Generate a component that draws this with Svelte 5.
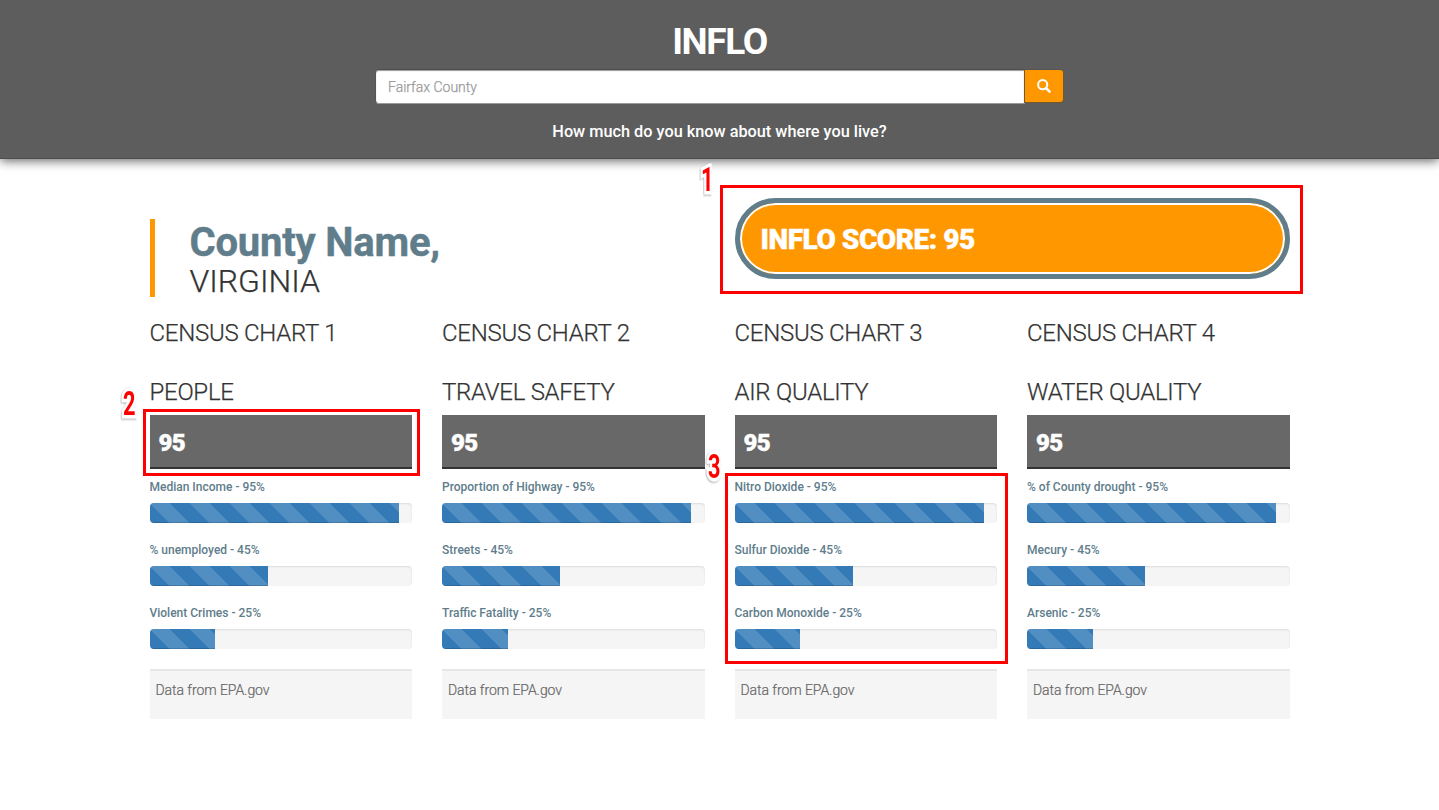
<script>
  const columns = [
    { chart: 'CENSUS CHART 1', title: 'PEOPLE', bars: [['Median Income', 95], ['% unemployed', 45], ['Violent Crimes', 25]] },
    { chart: 'CENSUS CHART 2', title: 'TRAVEL SAFETY', bars: [['Proportion of Highway', 95], ['Streets', 45], ['Traffic Fatality', 25]] },
    { chart: 'CENSUS CHART 3', title: 'AIR QUALITY', bars: [['Nitro Dioxide', 95], ['Sulfur Dioxide', 45], ['Carbon Monoxide', 25]] },
    { chart: 'CENSUS CHART 4', title: 'WATER QUALITY', bars: [['% of County drought', 95], ['Mecury', 45], ['Arsenic', 25]] }
  ];
</script>

<div class="page">
  <header>
    <h1>INFLO</h1>
    <div class="search">
      <input type="text" placeholder="Fairfax County" />
      <button aria-label="Search">
        <svg width="14" height="14" viewBox="0 0 14 14" fill="none" stroke="#fff">
          <circle cx="5.7" cy="5.7" r="4.6" stroke-width="2" />
          <path d="M9 9l3.6 3.6" stroke-width="2.5" stroke-linecap="round" />
        </svg>
      </button>
    </div>
    <p>How much do you know about where you live?</p>
  </header>

  <main>
    <section class="intro">
      <div class="county">
        <strong>County Name,</strong>
        <span>VIRGINIA</span>
      </div>
      <div class="score">INFLO SCORE: 95</div>
    </section>

    <section class="grid">
      {#each columns as col}
        <article>
          <h2>{col.chart}</h2>
          <h2 class="topic">{col.title}</h2>
          <div class="total">95</div>
          {#each col.bars as [label, value]}
            <div class="label">{label} - {value}%</div>
            <div class="track"><div class="fill" style="width: {value}%"></div></div>
          {/each}
          <footer>Data from EPA.gov</footer>
        </article>
      {/each}
    </section>
  </main>

  <div class="mark m1"></div>
  <div class="mark m2"></div>
  <div class="mark m3"></div>
  <span class="num n1">1</span>
  <span class="num n2">2</span>
  <span class="num n3">3</span>
</div>

<style>
  :global(body) { margin: 0; background: #fff; }
  .page, .page * { box-sizing: border-box; }
  .page {
    position: relative;
    height: 810px;
    overflow: hidden;
    font-family: Roboto, sans-serif;
    font-weight: 300;
    color: #333;
    background: #fff;
  }
  header {
    height: 159px;
    padding-top: 22px;
    display: flex;
    flex-direction: column;
    align-items: center;
    background: #5d5d5d;
    border-bottom: 1px solid #4d4d4d;
    box-shadow: 0 2px 10px rgba(0, 0, 0, 0.6);
    color: #fff;
  }
  h1 { margin: 0; font-size: 37px; line-height: 40px; font-weight: 700; letter-spacing: -1.4px; }
  .search { display: flex; align-items: flex-start; width: 689px; height: 35px; margin-top: 7px; }
  input {
    flex: 1;
    min-width: 0;
    height: 35px;
    padding: 1px 12px 0;
    border: 1px solid #999;
    border-top-color: #4c4c4c;
    border-left-color: #555;
    border-radius: 4px 0 0 4px;
    background: #fff;
    font: 300 14px Roboto, sans-serif;
    box-shadow: inset 0 1px 1px rgba(0, 0, 0, 0.4);
  }
  input::placeholder { color: #999; opacity: 1; -webkit-text-stroke: 0.25px #999; }
  button {
    width: 40px;
    height: 34px;
    margin-left: -1px;
    padding: 0;
    display: flex;
    align-items: center;
    justify-content: center;
    border: 1px solid #74582c;
    border-top-color: #555;
    border-radius: 0 4px 4px 0;
    background: #ff9800;
  }
  header p { margin: 17px 0 0; font-size: 16.3px; line-height: 22px; font-weight: 500; }
  main { width: 1140px; margin: 0 auto; }
  .intro { display: grid; grid-template-columns: 1fr 1fr; column-gap: 30px; height: 161px; padding-top: 39px; }
  .county { margin-top: 21px; height: 78px; padding-left: 35px; border-left: 5px solid #ff9800; }
  .county strong { display: block; padding-top: 4px; font-size: 40px; line-height: 40px; font-weight: 700; letter-spacing: -0.2px; color: #607d8b; -webkit-text-stroke: 0.4px #607d8b; }
  .county span { display: block; font-size: 32px; line-height: 36px; -webkit-text-stroke: 0.25px #333; }
  .score {
    height: 81px;
    padding-left: 21px;
    border: 5px solid #607d8b;
    border-radius: 41px;
    background: #ff9800;
    box-shadow: inset 0 0 0 2px #fff;
    color: #fff;
    font-size: 28px;
    line-height: 73px;
    font-weight: 900;
    letter-spacing: -0.45px;
    -webkit-text-stroke: 0.4px #fff;
  }
  .grid { display: grid; grid-template-columns: repeat(4, 1fr); column-gap: 30px; }
  h2 { margin: 0; font-size: 24px; line-height: 26px; font-weight: 300; letter-spacing: -0.27px; -webkit-text-stroke: 0.25px #333; }
  .topic { margin-top: 33px; }
  .total {
    height: 54px;
    margin: 10px 0 8px;
    padding-left: 9px;
    background: #686868;
    border-bottom: 2px solid #333;
    color: #fff;
    font-size: 24px;
    line-height: 56px;
    font-weight: 900;
    letter-spacing: -0.6px;
    -webkit-text-stroke: 0.4px #fff;
  }
  .label { height: 26px; font-size: 12px; line-height: 20px; font-weight: 500; color: #607d8b; }
  .track {
    height: 20px;
    margin-bottom: 17px;
    overflow: hidden;
    border-radius: 4px;
    background: #f5f5f5;
    box-shadow: inset 0 1px 2px rgba(0, 0, 0, 0.1);
  }
  .fill {
    height: 100%;
    background: #337ab7 linear-gradient(45deg, rgba(255, 255, 255, 0.15) 25%, transparent 25%, transparent 50%, rgba(255, 255, 255, 0.15) 50%, rgba(255, 255, 255, 0.15) 75%, transparent 75%) 0 0 / 40px 40px;
    box-shadow: inset 0 -1px 0 rgba(0, 0, 0, 0.15);
  }
  footer {
    height: 50px;
    margin-top: 20px;
    padding-left: 6px;
    border-top: 2px solid #e7e7e7;
    background: #f5f5f5;
    color: #666;
    font-size: 14px;
    line-height: 38px;
    letter-spacing: -0.06px;
    -webkit-text-stroke: 0.2px #666;
  }
  .mark { position: absolute; border: 3px solid #f00; }
  .m1 { left: 720px; top: 185px; width: 583px; height: 109px; }
  .m2 { left: 143px; top: 409px; width: 277px; height: 67px; }
  .m3 { left: 725px; top: 473px; width: 283px; height: 191px; }
  .num {
    position: absolute;
    color: #f00;
    font: 700 34px/34px Roboto, sans-serif;
    -webkit-text-stroke: 7px #fff;
    paint-order: stroke fill;
    transform: scaleX(0.64);
    transform-origin: left;
    filter: drop-shadow(-1px 1px 1px rgba(0, 0, 0, 0.3));
  }
  .n1 { left: 701px; top: 162px; }
  .n2 { left: 123px; top: 386px; }
  .n3 { left: 708px; top: 449px; }
</style>
